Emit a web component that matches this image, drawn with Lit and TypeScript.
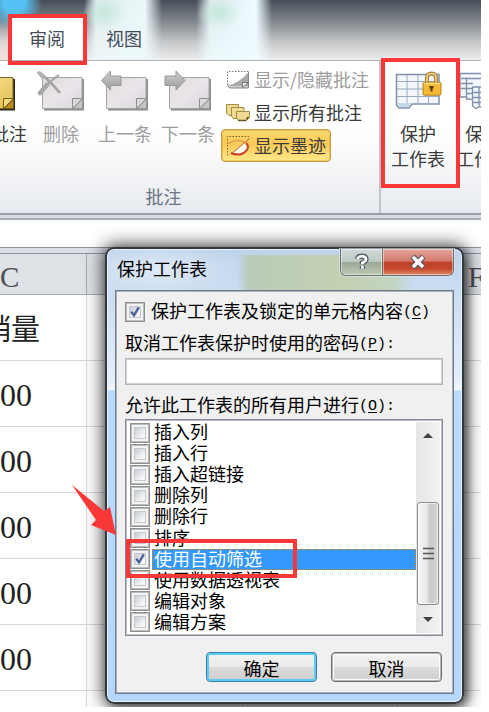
import { LitElement, html, css, svg } from "lit";
import { customElement, property } from "lit/decorators.js";
import { classMap } from "lit/directives/class-map.js";

const noteIcon = (kind: string) => {
  const gold = kind === "new";
  return html`<svg width="48" height="42" viewBox="0 0 48 42">
    <defs>
      <linearGradient id=${"paper-" + kind} x1="0" y1="0" x2="1" y2="1">
        <stop offset="0" stop-color=${gold ? "#f6e493" : "#dfdbdf"} />
        <stop offset=".5" stop-color=${gold ? "#eed274" : "#e9e5e9"} />
        <stop offset="1" stop-color=${gold ? "#e2bd4c" : "#dad5da"} />
      </linearGradient>
      <linearGradient id=${"arrow-" + kind} x1="0" y1="0" x2="0" y2="1">
        <stop offset="0" stop-color="#d2d2d2" /><stop offset="1" stop-color="#999" />
      </linearGradient>
    </defs>
    <path d="M7 9H47V40.500H7z" fill=${gold ? "#2c2718" : "#8d8d8d"} />
    <path d="M5.500 7.500H45V38.500H5.500z" fill=${`url(#paper-${kind})`} stroke=${gold ? "#77652c" : "#a5a5a5"} />
    <path d="M35.500 38.500V28.500H45.500z" fill=${gold ? "#f2dc79" : "#d9d9d9"} stroke=${gold ? "#74591b" : "#8f8f8f"} />
    <path d="M36 38.500H45.500V29z" fill=${gold ? "#b98b20" : "#c4c4c4"} stroke=${gold ? "#74591b" : "#999"} />
    ${kind === "del"
      ? svg`<path d="M2 2Q12 10 23 23" fill="none" stroke="#a0a0a0" stroke-width="2.500"/><path d="M22 5Q10 13 3 24" fill="none" stroke="#aaa" stroke-width="2.200"/><path d="M10 15L3 23" stroke="#a7a7a7" stroke-width="4.500" stroke-linecap="round"/><path d="M2 3l4 4" stroke="#b3b3b3" stroke-width="3.500" stroke-linecap="round"/>`
      : ""}
    ${kind === "prev"
      ? svg`<path d="M0.500 10.500L9.500 1V6H20V15.500H9.500V20z" fill="url(#arrow-prev)" stroke="#989898"/>`
      : ""}
    ${kind === "next"
      ? svg`<path d="M21 10.500L12 1V6H1V15.500H12V20z" fill="url(#arrow-next)" stroke="#989898"/>`
      : ""}
  </svg>`;
};

const toggleIcon = html`<svg width="26" height="22" viewBox="0 0 26 22">
  <path d="M23.500 2.500H2.500V16" fill="none" stroke="#777" stroke-dasharray="1.500 1.500" />
  <path d="M23.500 3V19H5L2 16Q14 15 23.500 3z" fill="#cfcfcf" />
  <path d="M3 17Q14 14 23 4V17z" fill="#8b8b8b" opacity=".55" />
  <path d="M2 16.500L5 19H23.500V3" fill="none" stroke="#858585" />
  <path d="M17.500 18.500V13.500H23.500z" fill="#eee" stroke="#777" />
</svg>`;

const allIcon = html`<svg width="26" height="22" viewBox="0 0 26 22">
  <g fill="#eedb91" stroke="#a38d43">
    <path d="M1.500 2.500H13.500V11L10 13.500H4L1.500 11z" />
    <path d="M6.500 5.500H19V13.500L16 16.500H8L6.500 14z" />
    <path d="M11.500 9.500H24.500V15L21.500 18.500H13.500L11.500 16z" />
  </g>
  <path d="M24.500 15L21.500 18.500V15z" fill="#5c4b18" />
  <path d="M13 18.500H21" stroke="#685421" stroke-width="1.500" />
</svg>`;

const inkIcon = html`<svg width="26" height="24" viewBox="0 0 26 24">
  <path d="M24 2.500H2.500V22" fill="none" stroke="#76622c" stroke-dasharray="1.500 1.500" />
  <path d="M3 10Q12 4 19 8" fill="none" stroke="#e3a356" stroke-width="1.500" />
  <path d="M19 9L8 19Q17 22 22 16Q24 12 19 9z" fill="#fff8ec" />
  <path d="M25 4L8 18.500" stroke="#ad6b3d" stroke-width="1" />
  <path d="M6 19Q15 23 21 17Q25 13 21 9" fill="none" stroke="#cb4327" stroke-width="2" />
</svg>`;

const sheetIcon = html`<svg width="48" height="40" viewBox="0 0 48 40">
  <path d="M2.500 5.500H45V35H18L15 39H5L2.500 36z" fill="#f3f7fc" stroke="#7f91aa" stroke-width="1.500" />
  <path d="M3 12.500H45M3 20H45M3 27.500H45M13 6V35M24 6V35M34.500 6V35" stroke="#9aabc1" />
  <path d="M4 34H17L14.500 38H5z" fill="#c7d8e8" />
  <path d="M33 14V9Q33 4.500 37.500 4.500T42 9V14" fill="none" stroke="#a8813d" stroke-width="4" />
  <path d="M33 14V9Q33 4.500 37.500 4.500T42 9V14" fill="none" stroke="#f2d483" stroke-width="1.600" />
  <rect x="29" y="13.200" width="18" height="13" rx="1.500" fill="#f4ba35" stroke="#b77d19" />
  <path d="M30.500 14.500H46" stroke="#ffe08a" stroke-width="1.500" />
  <path d="M35.500 17h4v2.500h-1v3h1.500h-4.500h1v-3h-1z" fill="#5b3d0b" />
</svg>`;

const bookIcon = html`<svg width="48" height="40" viewBox="0 0 48 40">
  <g fill="#f3f7fc" stroke="#7f91aa" stroke-width="1.300">
    <path d="M1 4.500H34V26H10L7 28H1z" />
    <path d="M2 9.500H8M2 14.500H8M2 19.500H8" />
    <path d="M7.500 9.500H38V31H14L11 30H7.500z" />
    <path d="M8 14.500H14M8 19.500H14M8 24.500H14" />
    <path d="M13.500 18H44V38H20L17 39.500L13.500 37z" />
    <path d="M14 23.500H44M14 28.500H44M14 33.500H44M20 18V37" />
  </g>
</svg>`;

@customElement("check-box")
class CheckBox extends LitElement {
  @property({ type: Boolean }) checked = false;
  static styles = css`
    :host { display: block; width: 20px; height: 20px; flex: none; }
    .box {
      box-sizing: border-box; width: 20px; height: 20px; border: 1px solid #8e8f8f;
      background: #f4f4f4; padding: 3px; box-shadow: inset 0 0 0 1px #b9bcbc;
    }
    .well {
      box-sizing: border-box; width: 100%; height: 100%; border: 1px solid #c4c9cf;
      background: linear-gradient(135deg, #c6cbd3, #f6f6f6 75%);
    }
    svg { display: block; width: 100%; height: 100%; overflow: visible; }
  `;
  render() {
    return html`<div class="box"><div class="well">
      ${this.checked
        ? html`<svg viewBox="0 0 12 12"><path d="M1.500 5.500L4.800 10L10.500 0.500" fill="none" stroke="#4a5f97" stroke-width="2.800" /></svg>`
        : ""}
    </div></div>`;
  }
}

@customElement("protect-dialog")
class ProtectDialog extends LitElement {
  static styles = css`
    :host { display: block; color: #000; font: 18px/20px "Noto Sans CJK SC", sans-serif; }
    * { box-sizing: border-box; }
    .frame {
      position: relative; width: 359px; height: 457px; border: 2px solid #33383d; border-radius: 9px;
      padding: 0 8px 8px;
      background:
        radial-gradient(ellipse 85px 26px at 50px 20px, #e6eef8cc, transparent),
        linear-gradient(90deg, transparent 130px, #b9cbb8 142px, #c4d1b2 235px, #c2d5c0 286px, transparent 305px) 0 6px / 100% 37px no-repeat,
        linear-gradient(#bed3ea, #cbddf1 42px, #e4eefa 130px, #f0f6fc 141px, #b7dafd 142px, #b5d7fc);
      box-shadow: inset 0 0 0 1px #e3f1fd, 0 0 18px 2px #000000b5, 3px 3px 10px #0007;
    }
    .title { height: 41px; display: flex; justify-content: space-between; }
    .title span { padding: 9px 0 0 2px; }
    .caps {
      display: flex; height: 27px; border: 1px solid #68717a; border-top: 0;
      border-radius: 0 0 6px 6px; overflow: hidden; box-shadow: 0 0 0 1px #dce7ef99;
    }
    .cap { display: grid; place-items: center; box-shadow: inset 0 0 0 1px #ffffff77; }
    .help { width: 42px; background: linear-gradient(#cfdad8, #bccbc2 48%, #9aa798 50%, #bdcbb1); border-right: 1px solid #716a69; }
    .close { width: 70px; background: linear-gradient(#e3a59a, #d4796b 47%, #c04028 50%, #c4472c 75%, #df8a68); }
    .client {
      height: 404px; border: 1px solid #6f7b88; background: #f0f0f0; padding: 11px 10px 0 9px;
      box-shadow: inset 0 0 0 1px #a9b1ba;
    }
    .line { display: flex; align-items: center; height: 20px; white-space: nowrap; }
    .line.main { gap: 6px; }
    .line.pass { margin-top: 12px; }
    .line.allow { margin-top: 11px; }
    .line > div { position: relative; top: -1px; }
    .key { font: 15px/18px "Liberation Mono", monospace; vertical-align: 2px; }
    u { text-underline-offset: 2px; }
    .input { height: 27px; margin-top: 4px; background: #fff; border: 1px solid #b3b5bc; width: 318px; box-shadow: inset 0 0 0 1px #d0d1d6; }
    .list {
      margin-top: 3px; width: 318px; height: 217px; border: 1px solid #858c97; background: #fff;
      display: flex; justify-content: space-between; padding: 2px 3px 2px 4px; box-shadow: inset 0 0 0 1px #b9bdc4;
    }
    .items { width: 286px; flex: none; }
    .item { display: flex; height: 21.100px; align-items: center; }
    .text { flex: 1; margin-left: 2px; padding-left: 2px; height: 21px; line-height: 18px; white-space: nowrap; }
    .on .text { background: #3399ff; color: #fff; outline: 1px dotted #d9822b; outline-offset: -1px; }
    .bar {
      width: 24px; flex: none; background: linear-gradient(90deg, #e6e6e6, #f2f2f2); display: flex;
      flex-direction: column; align-items: center;
    }
    .bar svg { flex: none; }
    .thumb {
      width: 22px; height: 103px; flex: none; border: 1px solid #8c8c8f; border-radius: 3px; margin: 54px 0 12px;
      background: linear-gradient(90deg, #f6f6f6, #e6e6e8 45%, #c7c8cb 60%, #d6d6d8);
      display: grid; place-items: center; box-shadow: inset 0 0 0 1px #fff9;
    }
    .buttons { display: flex; gap: 14px; justify-content: flex-end; margin-top: 16px; padding-right: 1px; }
    .btn {
      width: 111px; height: 30px; border: 1px solid #707070; border-radius: 4px; text-align: center;
      line-height: 30px; background: linear-gradient(#f3f3f3, #ebebeb 48%, #dadada 50%, #cfcfcf);
      box-shadow: inset 0 0 0 1px #b5b5b5, inset 0 0 0 2px #fcfcfc;
    }
    .btn.default { border-color: #3b7da3; box-shadow: inset 0 0 0 2px #5bcdf0; }
  `;
  private options = ["插入列", "插入行", "插入超链接", "删除列", "删除行", "排序", "使用自动筛选", "使用数据透视表", "编辑对象", "编辑方案"];
  render() {
    return html`<div class="frame">
      <div class="title">
        <span>保护工作表</span>
        <div class="caps">
          <div class="cap help"><svg width="16" height="18" viewBox="0 0 18 20">
            <path d="M4 6.500Q4.500 3.500 9 3.500T13.500 7Q13.500 9 9.500 11V12.500M9.500 14.500V17.500" fill="none" stroke="#575c66" stroke-width="6" />
            <path d="M4 6.500Q4.500 3.500 9 3.500T13.500 7Q13.500 9 9.500 11V12.500M9.500 14.500V17.500" fill="none" stroke="#fff" stroke-width="3" />
          </svg></div>
          <div class="cap close"><svg width="18" height="16" viewBox="0 0 18 16">
            <path d="M3.500 2.500L14.500 13.500M14.500 2.500L3.500 13.500" stroke="#5c5963" stroke-width="6" />
            <path d="M4 3L14 13M14 3L4 13" stroke="#fff" stroke-width="3.400" />
          </svg></div>
        </div>
      </div>
      <div class="client">
        <div class="line main"><check-box checked></check-box><div>保护工作表及锁定的单元格内容<span class="key">(<u>C</u>)</span></div></div>
        <div class="line pass"><div>取消工作表保护时使用的密码<span class="key">(<u>P</u>):</span></div></div>
        <div class="input"></div>
        <div class="line allow"><div>允许此工作表的所有用户进行<span class="key">(<u>O</u>):</span></div></div>
        <div class="list">
          <div class="items">
            ${this.options.map((o, i) => html`<div class=${classMap({ item: true, on: i === 6 })}>
              <check-box ?checked=${i === 6}></check-box><div class="text">${o}</div>
            </div>`)}
          </div>
          <div class="bar">
            <svg width="10" height="26" viewBox="0 0 10 26"><path d="M0 16L5 11L10 16z" fill="#444" /></svg>
            <div class="thumb"><svg width="11" height="13" viewBox="0 0 11 13"><path d="M0 1.500H11M0 6.500H11M0 11.500H11" stroke="#555" stroke-width="1.500" /></svg></div>
            <svg width="10" height="6" viewBox="0 0 10 6"><path d="M0 0H10L5 5z" fill="#444" /></svg>
          </div>
        </div>
        <div class="buttons"><div class="btn default">确定</div><div class="btn">取消</div></div>
      </div>
    </div>`;
  }
}

@customElement("app-root")
class AppRoot extends LitElement {
  static styles = css`
    :host { display: block; width: 489px; height: 712px; background: #fff; font: 18px/24px "Noto Sans CJK SC", sans-serif; color: #3b3b3b; }
    * { box-sizing: border-box; }
    .window { position: relative; width: 481px; height: 707px; overflow: hidden; background: #fff; }
    .tabs {
      height: 60px; display: flex; align-items: flex-end; padding-left: 10px; color: #444d59;
      background:
        radial-gradient(ellipse 28px 28px at 14px 2px, #55c1f4 40%, transparent),
        radial-gradient(ellipse 22px 16px at 104px 13px, #c3e8da, transparent),
        radial-gradient(ellipse 22px 16px at 219px 13px, #c3e8da, transparent),
        linear-gradient(90deg, transparent 84px, #edf8fbe8 96px, #edf8fb 145px, transparent 162px, transparent 196px, #edf9fce8 210px, #effbff 256px, transparent 272px),
        radial-gradient(ellipse 40px 40px at 4px 62px, #f4dfdc, transparent),
        linear-gradient(#454d57, #7f858b 35%, #c5c7c9 70%, #ededee);
    }
    .tab { width: 77px; height: 43px; line-height: 43px; text-align: center; }
    .tab.active { background: #fff; width: 74px; }
    .tab.view { margin-left: 1px; width: 78px; }
    .ribbon {
      height: 153px; border-top: 1px solid #aeb3ba; display: flex;
      background: linear-gradient(#fff 45%, #f7f8f9 65%, #e6e9ee);
    }
    .comments { width: 381px; flex: none; border-right: 2px solid #bfc4ca; }
    .tools { display: flex; height: 123px; width: 379px; overflow: hidden; }
    .big { flex: none; display: flex; flex-direction: column; align-items: center; padding-top: 9px; white-space: nowrap; }
    .big svg { display: block; margin-right: 1px; }
    .big span { margin-top: 8px; line-height: 26px; text-align: center; }
    .off { color: #9d9d9d; }
    .new { width: 72px; margin-left: -45px; }
    .del { width: 68px; }
    .prev { width: 60px; }
    .next { width: 66px; }
    .new svg { margin: 0 0 0 2px; }
    .prev svg, .next svg { margin: 0; }
    .rows { padding-top: 2px; display: flex; flex-direction: column; align-items: flex-start; }
    .row { height: 33px; display: flex; align-items: center; gap: 3px; padding-left: 3px; border: 1px solid transparent; white-space: nowrap; }
    .row span { line-height: 20px; margin-top: -2px; }
    .ink { border: 1px solid #c49a3e; border-radius: 4px; background: linear-gradient(#fbd86c, #fcc957 45%, #ffe989); padding-right: 4px; box-shadow: inset 0 0 0 1px #dfb04b88; }
    .group-label { text-align: center; margin-left: -52px; color: #6b7482; line-height: 24px; }
    .protect { display: flex; overflow: hidden; }
    .protect .big { padding-top: 8px; }
    .protect .big span { margin-top: 12px; line-height: 25px; }
    .protect .big svg { margin: 0; }
    .sheet { width: 74px; }
    .book { width: 56px; }
    .band { height: 7px; background: #d8dce2; border-top: 2px solid #9a9fa7; border-bottom: 2px solid #abb0b6; }
    .formula { height: 27px; background: linear-gradient(#f8f8f8, #fff 3px); }
    .rule { height: 7px; border-top: 1px solid #90939b; border-bottom: 1px solid #8f939a; background: #dcdfe9; }
    .grid { display: grid; grid-template-columns: 87px 156px 155px 83px; grid-template-rows: 41px repeat(7, 66px); }
    .cell { border-right: 1px solid #d6d8d9; border-bottom: 1px solid #d6d8d9; color: #222; font: 32px/68px "Liberation Serif", serif; white-space: nowrap; overflow: hidden; }
    .cell:nth-child(4n) { border-right: 0; }
    .head { background: #dee1e5; border-color: #a6abb1; color: #4c5057; font-size: 29px; line-height: 46px; }
    .head.hf { padding-left: 70px; }
    .cjk { font: 400 29px/65px "Noto Sans CJK SC", sans-serif; display: flex; justify-content: flex-end; padding-right: 46px; }
    .overlay { position: absolute; left: 105px; top: 247px; }
    .mark { position: absolute; border: 4px solid #fb3838; }
    .m1 { left: 8px; top: 14px; width: 79px; height: 51px; }
    .m2 { left: 381px; top: 58px; width: 79px; height: 130px; }
    .m3 { left: 126px; top: 539px; width: 171px; height: 39px; }
    .pointer { position: absolute; left: 71px; top: 484px; }
  `;
  render() {
    const cells = ["销量", "00", "00", "00", "00", "00", ""];
    return html`<div class="window">
      <div class="tabs"><div class="tab active">审阅</div><div class="tab view">视图</div></div>
      <div class="ribbon">
        <div class="comments">
          <div class="tools">
            <div class="big new">${noteIcon("new")}<span>新建批注</span></div>
            <div class="big off del">${noteIcon("del")}<span>删除</span></div>
            <div class="big off prev">${noteIcon("prev")}<span>上一条</span></div>
            <div class="big off next">${noteIcon("next")}<span>下一条</span></div>
            <div class="rows">
              <div class="row off">${toggleIcon}<span>显示/隐藏批注</span></div>
              <div class="row">${allIcon}<span>显示所有批注</span></div>
              <div class="row ink">${inkIcon}<span>显示墨迹</span></div>
            </div>
          </div>
          <div class="group-label">批注</div>
        </div>
        <div class="protect">
          <div class="big sheet">${sheetIcon}<span>保护<br />工作表</span></div>
          <div class="big book">${bookIcon}<span>保护<br />工作簿</span></div>
        </div>
      </div>
      <div class="band"></div>
      <div class="formula"></div>
      <div class="rule"></div>
      <div class="grid">
        <div class="cell head">C</div><div class="cell head"></div><div class="cell head"></div><div class="cell head hf">F</div>
        ${cells.map((c, i) => html`<div class=${classMap({ cell: true, cjk: i === 0 })}>${c}</div>
          <div class="cell"></div><div class="cell"></div><div class="cell"></div>`)}
      </div>
      <protect-dialog class="overlay"></protect-dialog>
      <div class="mark m1"></div>
      <div class="mark m2"></div>
      <div class="mark m3"></div>
      <svg class="pointer" width="48" height="54" viewBox="0 0 48 54"><path d="M1 1L33 27L39 23L45 51L20 41L25 36z" fill="#fb3838" /></svg>
    </div>`;
  }
}
